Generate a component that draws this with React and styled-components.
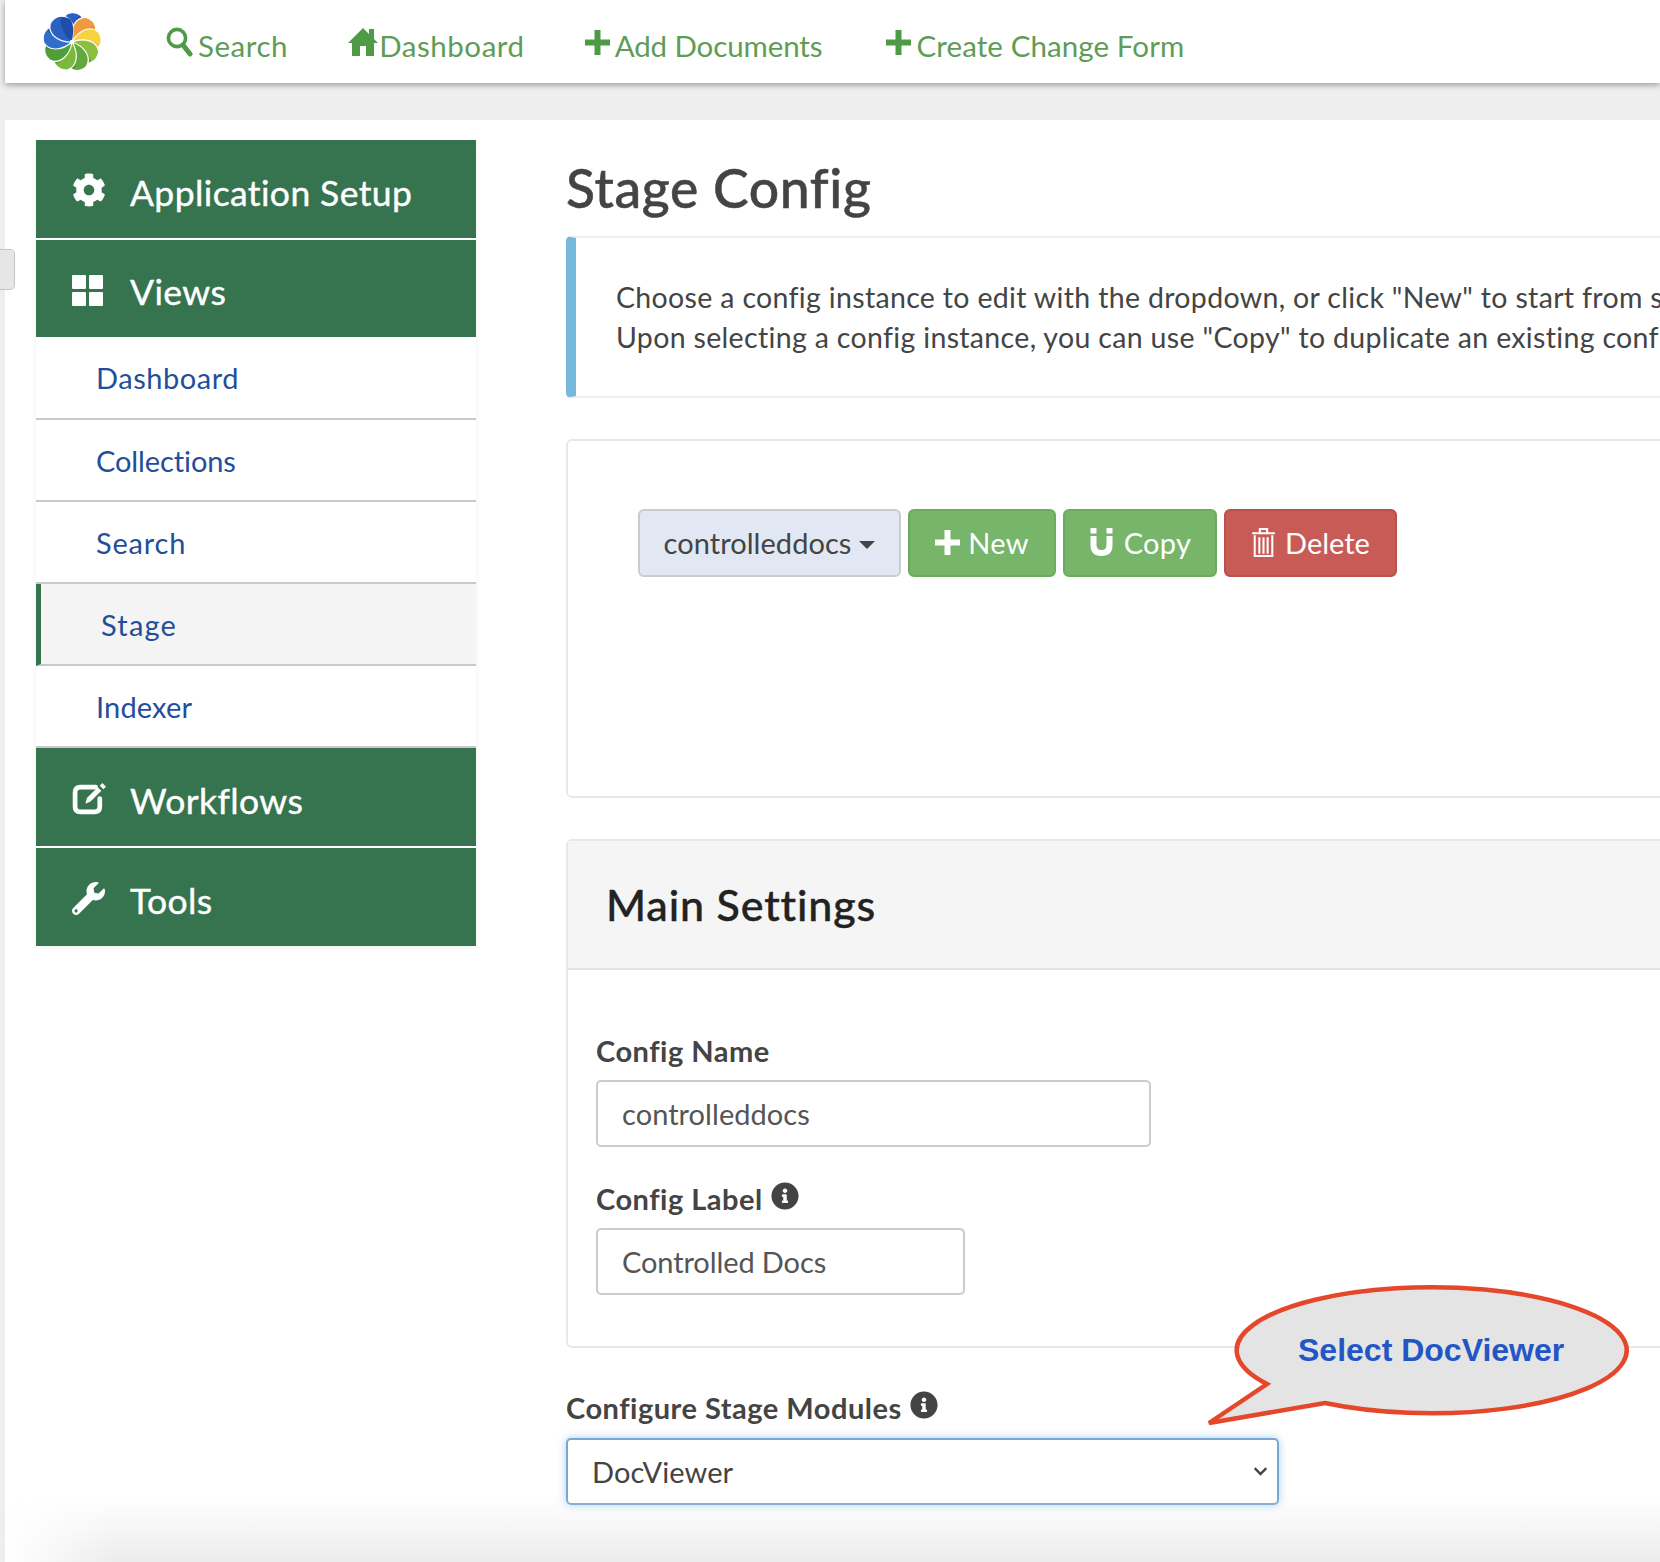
import React from 'react';
import styled, { createGlobalStyle } from 'styled-components';
import { FaCog, FaWrench, FaInfoCircle, FaChevronDown } from 'react-icons/fa';

const GlobalStyle = createGlobalStyle`
  html, body {
    margin: 0;
    padding: 0;
    width: 1660px;
    height: 1562px;
    overflow: hidden;
    background: #eeeeee;
    font-family: 'Lato', 'Open Sans', sans-serif;
  }
  * { box-sizing: border-box; }
`;

const Page = styled.div`
  position: relative;
  width: 1660px;
  height: 1562px;
  padding-left: 5px;
  overflow: hidden;
`;

const Navbar = styled.nav`
  display: flex;
  align-items: center;
  height: 83px;
  padding: 0 0 0 36px;
  background: #fff;
  box-shadow: 0 2px 6px rgba(0, 0, 0, 0.35);
`;

const NavLink = styled.a`
  display: flex;
  align-items: center;
  gap: ${(p) => p.$gap || 5}px;
  margin-left: ${(p) => p.$left}px;
  padding-top: 7px;
  color: #5f9c56;
  font-size: 29.5px;
  letter-spacing: ${(p) => p.$spacing ?? 0.55}px;
  white-space: nowrap;

  svg {
    flex: none;
    color: #4f9a45;
    margin-top: -6px;
  }
`;

const Content = styled.div`
  position: relative;
  display: flex;
  height: 1442px;
  margin-top: 37px;
  padding: 20px 0 0 31px;
  background: #fff;
  overflow: hidden;

  &::after {
    content: '';
    position: absolute;
    left: 0;
    right: 0;
    bottom: 0;
    height: 66px;
    background: linear-gradient(to top, #ececec, rgba(236, 236, 236, 0));
    mask-image: linear-gradient(to right, transparent, black 110px);
    pointer-events: none;
  }
`;

const Sidebar = styled.aside`
  flex: none;
  align-self: flex-start;
  width: 440px;
  box-shadow: 0 2px 6px rgba(0, 0, 0, 0.06);
`;

const SideHeader = styled.div`
  display: flex;
  align-items: center;
  height: ${(p) => p.$height || 98}px;
  margin-bottom: ${(p) => p.$gap ?? 2}px;
  padding: 6px 0 0 36px;
  background: #36734f;
  color: #fff;
  font-size: 35.5px;
  letter-spacing: 0.4px;
  -webkit-text-stroke: 0.4px #fff;

  svg {
    flex: none;
  }
`;

const HeaderIcon = styled.span`
  display: flex;
  width: 58px;
  margin-top: -4px;
`;

const SideItem = styled.a`
  display: flex;
  align-items: center;
  height: ${(p) => p.$height || 82}px;
  padding-left: 60px;
  border-bottom: 2px solid #c8cac9;
  border-left: ${(p) => (p.$active ? '5px solid #36734f' : 'none')};
  background: ${(p) => (p.$active ? '#f4f4f4' : '#fff')};
  color: #1f4f9b;
  font-size: 29px;
  letter-spacing: ${(p) => p.$spacing ?? 0.3}px;
`;

const Main = styled.main`
  flex: none;
  width: 1120px;
  margin-left: 90px;
`;

const Heading = styled.h1`
  display: flex;
  align-items: center;
  height: 96px;
  margin: 0;
  padding-bottom: 2px;
  color: #444;
  font-size: 53.5px;
  font-weight: 500;
  letter-spacing: 0.6px;
  -webkit-text-stroke: 0.5px #444;
`;

const InfoBox = styled.div`
  height: 162px;
  padding: 39px 0 0 40px;
  border: 2px solid #eeeeee;
  border-left: 10px solid #76b9dc;
  border-radius: 5px;
  color: #444;
  font-size: 28.5px;
  line-height: 40px;
  letter-spacing: 0.33px;
  white-space: nowrap;
  overflow: hidden;
`;

const Panel = styled.section`
  margin-top: ${(p) => p.$top}px;
  border: 2px solid #e8e8e8;
  border-radius: 6px;
`;

const ToolPanel = styled(Panel)`
  height: 359px;
  padding: 68px 0 0 70px;
`;

const ButtonRow = styled.div`
  display: flex;
  gap: 7px;
`;

const Button = styled.button`
  display: flex;
  align-items: center;
  justify-content: center;
  gap: ${(p) => p.$gap || 8}px;
  width: ${(p) => p.$width}px;
  height: 68px;
  padding: 0 0 2px;
  border: 2px solid ${(p) => p.$border};
  border-radius: 6px;
  background: ${(p) => p.$bg};
  color: ${(p) => p.$color || '#fff'};
  font-family: inherit;
  font-size: 29px;
  letter-spacing: ${(p) => p.$spacing ?? 0.3}px;
`;

const Caret = styled.span`
  width: 0;
  height: 0;
  margin-top: 5px;
  border-left: 8px solid transparent;
  border-right: 8px solid transparent;
  border-top: 8px solid #444;
`;

const PanelHeader = styled.header`
  display: flex;
  align-items: center;
  height: 129px;
  padding-left: 38px;
  background: #f5f5f5;
  border-bottom: 2px solid #e4e4e4;
  color: #222;
  font-size: 43px;
  font-weight: 500;
  letter-spacing: 0.85px;
  -webkit-text-stroke: 0.4px #222;
`;

const PanelBody = styled.div`
  padding: 62px 0 51px 28px;
`;

const Label = styled.label`
  display: flex;
  align-items: center;
  gap: 8px;
  height: 36px;
  margin-top: ${(p) => p.$top || 0}px;
  color: #444;
  font-size: 29px;
  font-weight: 700;
  letter-spacing: 0.5px;

  svg {
    margin-top: -4px;
  }
`;

const FieldBox = styled.div`
  display: flex;
  align-items: center;
  justify-content: space-between;
  width: ${(p) => p.$width}px;
  height: 67px;
  margin-top: 12px;
  padding: 0 24px;
  border: 2px solid #cccccc;
  border-radius: 5px;
  background: #fff;
  color: #555;
  font-size: 29px;
  letter-spacing: ${(p) => p.$spacing ?? 0.05}px;
`;

const SelectBox = styled(FieldBox)`
  margin-top: 13px;
  padding-right: 9px;
  border-color: #7aa7d0;
  box-shadow: 0 0 8px rgba(102, 175, 233, 0.6);
  color: #444;
`;

const Bubble = styled.div`
  position: absolute;
  left: 1195px;
  top: 1280px;
  width: 440px;
  height: 150px;
`;

const BubbleText = styled.span`
  position: absolute;
  left: 103px;
  top: 50px;
  color: #2356c4;
  font-family: 'Liberation Sans', Arial, sans-serif;
  font-size: 32px;
  line-height: 40px;
  font-weight: 700;
  white-space: nowrap;
`;

const DrawerHandle = styled.div`
  position: absolute;
  z-index: 2;
  left: 0;
  top: 249px;
  width: 15px;
  height: 41px;
  background: #e6e6e6;
  border: 1px solid #c4c4c4;
  border-left: none;
  border-radius: 0 5px 5px 0;
`;

const petals = ['#2a5fc0', '#ef9a3c', '#f6d23e', '#8cbf3f', '#62a83c', '#7cb83e', '#4f9e3a', '#2f6fcb', '#2a62c4'];
const petalShades = ['#1f4da8', '#e5872d', '#eec22b', '#5da035', '#3f8a30', '#5fa033', '#3a8a30', '#2258b0', '#1f4da8'];

const Logo = () => (
  <svg width="62" height="62" viewBox="-31 -31 62 62">
    {petals.map((c, i) => (
      <g key={i} transform={`rotate(${i * 40})`}>
        <path d="M0 0C-10-8-14-21-5-28C5-32 15-25 12-14C10-8 4-4 0 0Z" fill={c} stroke="#fff" strokeWidth="1.2" />
        <path d="M0 0C-2-9 1-20 7-26C13-22 15-18 12-14C10-8 4-4 0 0Z" fill={petalShades[i]} />
      </g>
    ))}
    <circle r="2.2" fill="#fff" />
  </svg>
);

const SearchIcon = () => (
  <svg width="27" height="30" viewBox="0 0 27 30">
    <circle cx="11" cy="11" r="8.6" fill="none" stroke="currentColor" strokeWidth="3.6" />
    <path d="M17 18L24 27" stroke="currentColor" strokeWidth="5" strokeLinecap="round" />
  </svg>
);

const HomeIcon = () => (
  <svg width="30" height="30" viewBox="0 0 30 30">
    <path d="M15 1L21 7V2H26V12L30 16H26V29H18V19H12V29H4V16H0Z" fill="currentColor" />
  </svg>
);

const PlusIcon = ({ size = 25 }) => (
  <svg width={size} height={size} viewBox="0 0 25 25">
    <path d="M9.5 0H15.5V9.5H25V15.5H15.5V25H9.5V15.5H0V9.5H9.5Z" fill="currentColor" />
  </svg>
);

const GridIcon = () => (
  <svg width="32" height="32" viewBox="0 0 32 32">
    <rect x="0" y="1" width="14" height="14" rx="1" fill="#fff" />
    <rect x="17" y="1" width="14" height="14" rx="1" fill="#fff" />
    <rect x="0" y="18" width="14" height="14" rx="1" fill="#fff" />
    <rect x="17" y="18" width="14" height="14" rx="1" fill="#fff" />
  </svg>
);

const EditIcon = () => (
  <svg width="35" height="33" viewBox="0 0 34 32">
    <path d="M23 5H8Q3 5 3 10V24Q3 29 8 29H22Q27 29 27 24V16" fill="none" stroke="#fff" strokeWidth="4.6" strokeLinecap="round" />
    <path d="M13 21L14.5 15.5L25 5L28.5 8.5L18 19Z" fill="#fff" />
    <path d="M27 3.5L29.5 1L33 4.5L30.5 7Z" fill="#fff" />
  </svg>
);

const MagnetIcon = () => (
  <svg width="25" height="30" viewBox="0 0 24 30">
    <path d="M1 9H7V18Q7 23 12 23Q17 23 17 18V9H23V18Q23 29 12 29Q1 29 1 18Z" fill="#fff" />
    <rect x="1" y="1" width="6" height="5.5" fill="#fff" />
    <rect x="17" y="1" width="6" height="5.5" fill="#fff" />
  </svg>
);

const TrashIcon = () => (
  <svg width="25" height="31" viewBox="0 0 24 30">
    <path d="M1 6H23M8.5 5V2H15.5V5" fill="none" stroke="#fff" strokeWidth="2" />
    <path d="M3.5 8V28H20.5V8" fill="none" stroke="#fff" strokeWidth="2" />
    <path d="M8 10V26M12 10V26M16 10V26" stroke="#fff" strokeWidth="2" />
  </svg>
);

export default function App() {
  return (
    <Page>
      <GlobalStyle />
      <Navbar>
        <Logo />
        <NavLink $left={63}><SearchIcon />Search</NavLink>
        <NavLink $left={60} $gap={1}><HomeIcon />Dashboard</NavLink>
        <NavLink $left={60} $gap={5} $spacing={-0.1}><PlusIcon />Add Documents</NavLink>
        <NavLink $left={63} $gap={6} $spacing={0.1}><PlusIcon />Create Change Form</NavLink>
      </Navbar>
      <DrawerHandle />
      <Content>
        <Sidebar>
          <SideHeader>
            <HeaderIcon><FaCog size={34} /></HeaderIcon>Application Setup
          </SideHeader>
          <SideHeader $height={97} $gap={0}>
            <HeaderIcon><GridIcon /></HeaderIcon>Views
          </SideHeader>
          <SideItem $height={83} $spacing={0.55}>Dashboard</SideItem>
          <SideItem $spacing={-0.1}>Collections</SideItem>
          <SideItem $spacing={0.8}>Search</SideItem>
          <SideItem $active $spacing={1.2}>Stage</SideItem>
          <SideItem $spacing={0.15}>Indexer</SideItem>
          <SideHeader>
            <HeaderIcon><EditIcon /></HeaderIcon>Workflows
          </SideHeader>
          <SideHeader $height={98} $gap={0}>
            <HeaderIcon><FaWrench size={33} /></HeaderIcon>Tools
          </SideHeader>
        </Sidebar>
        <Main>
          <Heading>Stage Config</Heading>
          <InfoBox>
            Choose a config instance to edit with the dropdown, or click "New" to start from scratch.
            <br />
            Upon selecting a config instance, you can use "Copy" to duplicate an existing config.
          </InfoBox>
          <ToolPanel $top={41}>
            <ButtonRow>
              <Button $width={263} $bg="#e1e8f3" $border="#c8ccd2" $color="#444" $spacing={0.05}>
                controlleddocs <Caret />
              </Button>
              <Button $width={148} $bg="#76b56a" $border="#6cab60"><PlusIcon />New</Button>
              <Button $width={154} $bg="#76b56a" $border="#6cab60" $gap={10}><MagnetIcon />Copy</Button>
              <Button $width={173} $bg="#c85b55" $border="#b9514b" $gap={9} $spacing={0}><TrashIcon />Delete</Button>
            </ButtonRow>
          </ToolPanel>
          <Panel $top={41}>
            <PanelHeader>Main Settings</PanelHeader>
            <PanelBody>
              <Label>Config Name</Label>
              <FieldBox $width={555}>controlleddocs</FieldBox>
              <Label $top={33}>Config Label <FaInfoCircle size={28} /></Label>
              <FieldBox $width={369} $spacing={-0.1}>Controlled Docs</FieldBox>
            </PanelBody>
          </Panel>
          <Label $top={41}>Configure Stage Modules <FaInfoCircle size={28} /></Label>
          <SelectBox $width={713}>DocViewer<FaChevronDown size={15} /></SelectBox>
        </Main>
      </Content>
      <Bubble>
        <svg width="440" height="150" viewBox="0 0 440 150">
          <path d="M72 104A195 63 0 1 1 130 123L14 143Z" fill="#e4e4e4" stroke="#e5472a" strokeWidth="4.5" />
        </svg>
        <BubbleText>Select DocViewer</BubbleText>
      </Bubble>
    </Page>
  );
}
